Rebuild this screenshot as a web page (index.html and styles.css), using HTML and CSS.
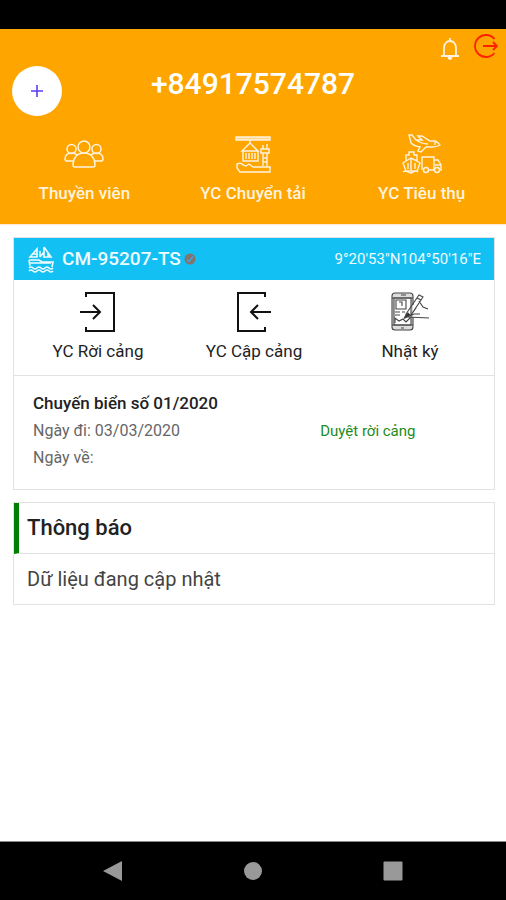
FILE: index.html
```html
<!DOCTYPE html>
<html lang="vi">
<head>
<meta charset="utf-8">
<meta name="viewport" content="width=device-width, initial-scale=1">
<title>CM-95207-TS</title>
<link rel="stylesheet" href="styles.css">
</head>
<body>
<div class="status-bar"></div>
<header class="header">
  <div class="tools">
    <button class="icon-button" type="button" aria-label="Thông báo">
      <svg width="20" height="24" viewBox="0 0 20 24" fill="none" stroke="#fff3df" stroke-width="1.8"><path d="M1 19h18M4 18V11c0-4 2.500-7 6-7s6 3 6 7v7M10 1v3"/><path d="M8 20.500a2 2 0 0 0 4 0z" fill="#fff3df" stroke="#fff3df" stroke-width="1"/></svg>
    </button>
    <button class="icon-button" type="button" aria-label="Đăng xuất">
      <svg width="24" height="26" viewBox="0 0 24 26" fill="none" stroke="#ff2000" stroke-width="1.800"><path d="M20.500 6A11 11 0 1 0 20.500 20M9 13h14M19 9l4 4-4 4"/></svg>
    </button>
  </div>
  <div class="account">
    <button class="add" type="button" aria-label="Thêm"><svg width="12" height="12" viewBox="0 0 12 12" stroke="#5a3df0" stroke-width="1.600"><path d="M6 0v12M0 6h12"/></svg></button>
    <h1 class="phone">+84917574787</h1>
  </div>
  <nav class="shortcuts">
    <a class="shortcut" href="#">
      <svg width="42" height="42" viewBox="0 0 42 42" fill="none" stroke="#fff3df" stroke-width="1.500"><circle cx="21" cy="14" r="6"/><circle cx="8.500" cy="16" r="4.500"/><circle cx="33.500" cy="16" r="4.500"/><path d="M10 32c0-7 4-12 11-12s11 5 11 12q0 2-2 2H12q-2 0-2-2zM11 28H4q-2 0-2-2c0-4 3-6 7-6q3 0 5 2M31 28h7q2 0 2-2c0-4-3-6-7-6q-3 0-5 2"/></svg>
      <span>Thuyền viên</span>
    </a>
    <a class="shortcut" href="#">
      <svg width="42" height="42" viewBox="0 0 42 42" fill="none" stroke="#fff3df" stroke-width="1.400"><path d="M4 4h34v3H4z" fill="#fff3df" fill-opacity="0.600"/><path d="M18 7v4M18 10l-8 8h16zM11 18h15v10H11zM14 20v6M17 20v6M20 20v6M23 20v6M29 16h8v4h-8zM31 20v13M35 20v13M31 25h4M31 29h4M31 16v-4M35 16v-5M5 31q4-2 6 1l3 1 3-2 4 3h17v5H8l-3-4z"/></svg>
      <span>YC Chuyển tải</span>
    </a>
    <a class="shortcut" href="#">
      <svg width="42" height="42" viewBox="0 0 42 42" fill="none" stroke="#fff3df" stroke-width="1.400"><path d="M8 2h3l4 5h6l-4-4h4l8 5h5q4 2 5 4-3 2-8 2h-6l-5 5-3-1 2-4q-6-1-9-4zM15 7q6 4 12 4M34 9v3M2 30l3-2v-6h3v-3h5v3h3v6l3 2-3 8H5zM5 28l5-3 6 3M10 25v12M7 30v6M14 30v6M2 39q3-2 5 0 3 2 5 0 3-2 5 0M21 37V24h12v13h-5M33 27h4l3 5v5h-2M34 32h6"/><circle cx="25" cy="37" r="2.500"/><circle cx="36" cy="37" r="2.500"/></svg>
      <span>YC Tiêu thụ</span>
    </a>
  </nav>
</header>
<main class="content">
  <section class="card">
    <div class="vessel">
      <svg width="28" height="28" viewBox="0 0 28 28" fill="none" stroke="#effbff" stroke-width="1.600"><path d="M3 12l7-8v8zM6 9h4M13 12V6M17 2v11M17 2l7 10h-7M17 7l-4 5M21 8v4M2 15h10l3 2h11l-1 5M2 15l1 6M2 18h22M2 23q2-2 4 0t4 0 4 0 4 0 4 0 4 0M2 26q2-2 4 0t4 0 4 0 4 0 4 0 4 0"/></svg>
      <h2 class="vessel-name">CM-95207-TS</h2>
      <svg class="verified" width="12" height="12" viewBox="0 0 12 12"><circle cx="6" cy="6" r="5.500" fill="#84736f"/><path d="M3 6.500l2 2 4-5" fill="none" stroke="#35aedb" stroke-width="1.300"/></svg>
      <span class="position">9°20'53"N104°50'16"E</span>
    </div>
    <div class="actions">
      <a class="action" href="#">
        <svg width="42" height="42" viewBox="0 0 42 42" fill="none" stroke="#111" stroke-width="2"><path d="M9 6V2h28v38H9v-4M3 21h20M16 14l7 7-7 7"/></svg>
        <span>YC Rời cảng</span>
      </a>
      <a class="action" href="#">
        <svg width="42" height="42" viewBox="0 0 42 42" fill="none" stroke="#111" stroke-width="2"><path d="M32 6V2H5v38h27v-4M38 21H18M25 14l-7 7 7 7"/></svg>
        <span>YC Cập cảng</span>
      </a>
      <a class="action" href="#">
        <svg width="42" height="42" viewBox="0 0 42 42" fill="none" stroke="#444" stroke-width="1.100"><path d="M24 14V5q0-3-3-3H6Q3 2 3 5v31q0 3 3 3h15q3 0 3-3V26" fill="#ddd"/><path d="M5 7h17v27H5z" fill="#fff"/><path d="M3 7h21M3 34h21M12 4h5M12 37h3M7 9h10v9H7zM10 11h3v4M6 21h5M6 24h5M13 21h3M6 32v-5l4 3 4-2 3 3 5-5M17 23L30 4l4 2-12 18-6 3zM28 7l4 2M30 10l4 6 5 2M18 26l7-3h6M19 26l21 1M22 24l5-7"/><path d="M15 27l4-5 2 2z" fill="#222"/></svg>
        <span>Nhật ký</span>
      </a>
    </div>
    <div class="trip">
      <div class="trip-info">
        <h3 class="trip-title">Chuyến biển số 01/2020</h3>
        <p class="trip-date">Ngày đi: 03/03/2020</p>
        <p class="trip-date">Ngày về:</p>
      </div>
      <p class="trip-state">Duyệt rời cảng</p>
    </div>
  </section>
  <section class="card">
    <h2 class="notice-title">Thông báo</h2>
    <p class="notice-text">Dữ liệu đang cập nhật</p>
  </section>
</main>
<nav class="system-nav">
  <button class="icon-button" type="button" aria-label="Quay lại"><svg width="20" height="22" viewBox="0 0 20 22" fill="#999"><path d="M0 11L19 1v20z"/></svg></button>
  <button class="icon-button" type="button" aria-label="Trang chủ"><svg width="20" height="20" viewBox="0 0 20 20" fill="#999"><circle cx="10" cy="10" r="9"/></svg></button>
  <button class="icon-button" type="button" aria-label="Gần đây"><svg width="20" height="20" viewBox="0 0 20 20" fill="#999"><rect width="19" height="19" x="0.500" y="0.500" rx="1"/></svg></button>
</nav>
</body>
</html>
```
FILE: styles.css
```css
* {
  box-sizing: border-box;
}

body {
  margin: 0;
  min-height: 100vh;
  display: flex;
  flex-direction: column;
  background: #fff;
  color: #222;
  font-family: Roboto, "Noto Sans", sans-serif;
}

h1, h2, h3, p {
  margin: 0;
  font-weight: 500;
}

a {
  color: inherit;
  text-decoration: none;
}

svg {
  display: block;
}

button {
  padding: 0;
  border: 0;
  background: none;
  display: grid;
  place-items: center;
}

.status-bar {
  height: 29px;
  background: #000;
}

.header {
  padding-bottom: 21px;
  background: #ffa500;
  border-bottom: 1px solid #ffe8d8;
  color: #fff3df;
}

.tools {
  display: flex;
  justify-content: flex-end;
  align-items: flex-start;
  gap: 14px;
  padding: 4px 8px 0;
  height: 34px;
}

.tools .icon-button:first-child {
  padding-top: 4px;
}

.account {
  display: grid;
  grid-template-columns: 50px 1fr 50px;
  padding: 3px 12px 0;
}

.add {
  width: 50px;
  height: 50px;
  border-radius: 50%;
  background: #fff;
}

.phone {
  color: #fff;
  font-size: 30px;
  line-height: 36px;
  text-align: center;
}

.shortcuts {
  display: grid;
  grid-template-columns: repeat(3, 1fr);
  padding-top: 17px;
}

.shortcut, .action {
  display: flex;
  flex-direction: column;
  align-items: center;
  font-size: 17px;
  line-height: 20px;
}

.shortcut {
  gap: 8px;
  font-weight: 500;
}

.content {
  flex: 1;
  display: flex;
  flex-direction: column;
  gap: 12px;
  padding: 12px 11px 12px 13px;
}

.card {
  border: 1px solid #e2e2e2;
}

.vessel {
  display: flex;
  align-items: center;
  height: 42px;
  padding: 0 13px;
  background: #13c0f3;
  color: #effbff;
}

.vessel-name {
  margin-left: 7px;
  font-size: 19px;
  line-height: 24px;
}

.verified {
  margin-left: 3px;
}

.position {
  margin-left: auto;
  font-size: 15px;
}

.actions {
  display: grid;
  grid-template-columns: repeat(3, 1fr);
  padding: 11px 6px 14px;
  border-bottom: 1px solid #e2e2e2;
}

.action {
  gap: 8px;
}

.trip {
  display: grid;
  grid-template-columns: 3fr 2fr;
  align-items: center;
  padding: 14px 19px 18px;
}

.trip-title {
  font-size: 17px;
  line-height: 27px;
}

.trip-date {
  color: #666;
  font-size: 16px;
  font-weight: 400;
  line-height: 27px;
}

.trip-state {
  padding-left: 22px;
  color: #228b22;
  font-size: 15px;
  font-weight: 400;
}

.notice-title {
  padding: 12px 8px;
  border-left: 5px solid #008000;
  border-bottom: 1px solid #e2e2e2;
  font-size: 22px;
  line-height: 26px;
}

.notice-text {
  padding: 12px 13px;
  color: #444;
  font-size: 20px;
  font-weight: 400;
  line-height: 26px;
}

.system-nav {
  display: flex;
  justify-content: center;
  align-items: center;
  gap: 120px;
  height: 59px;
  background: #000;
  border-top: 1px solid #888;
}
```
